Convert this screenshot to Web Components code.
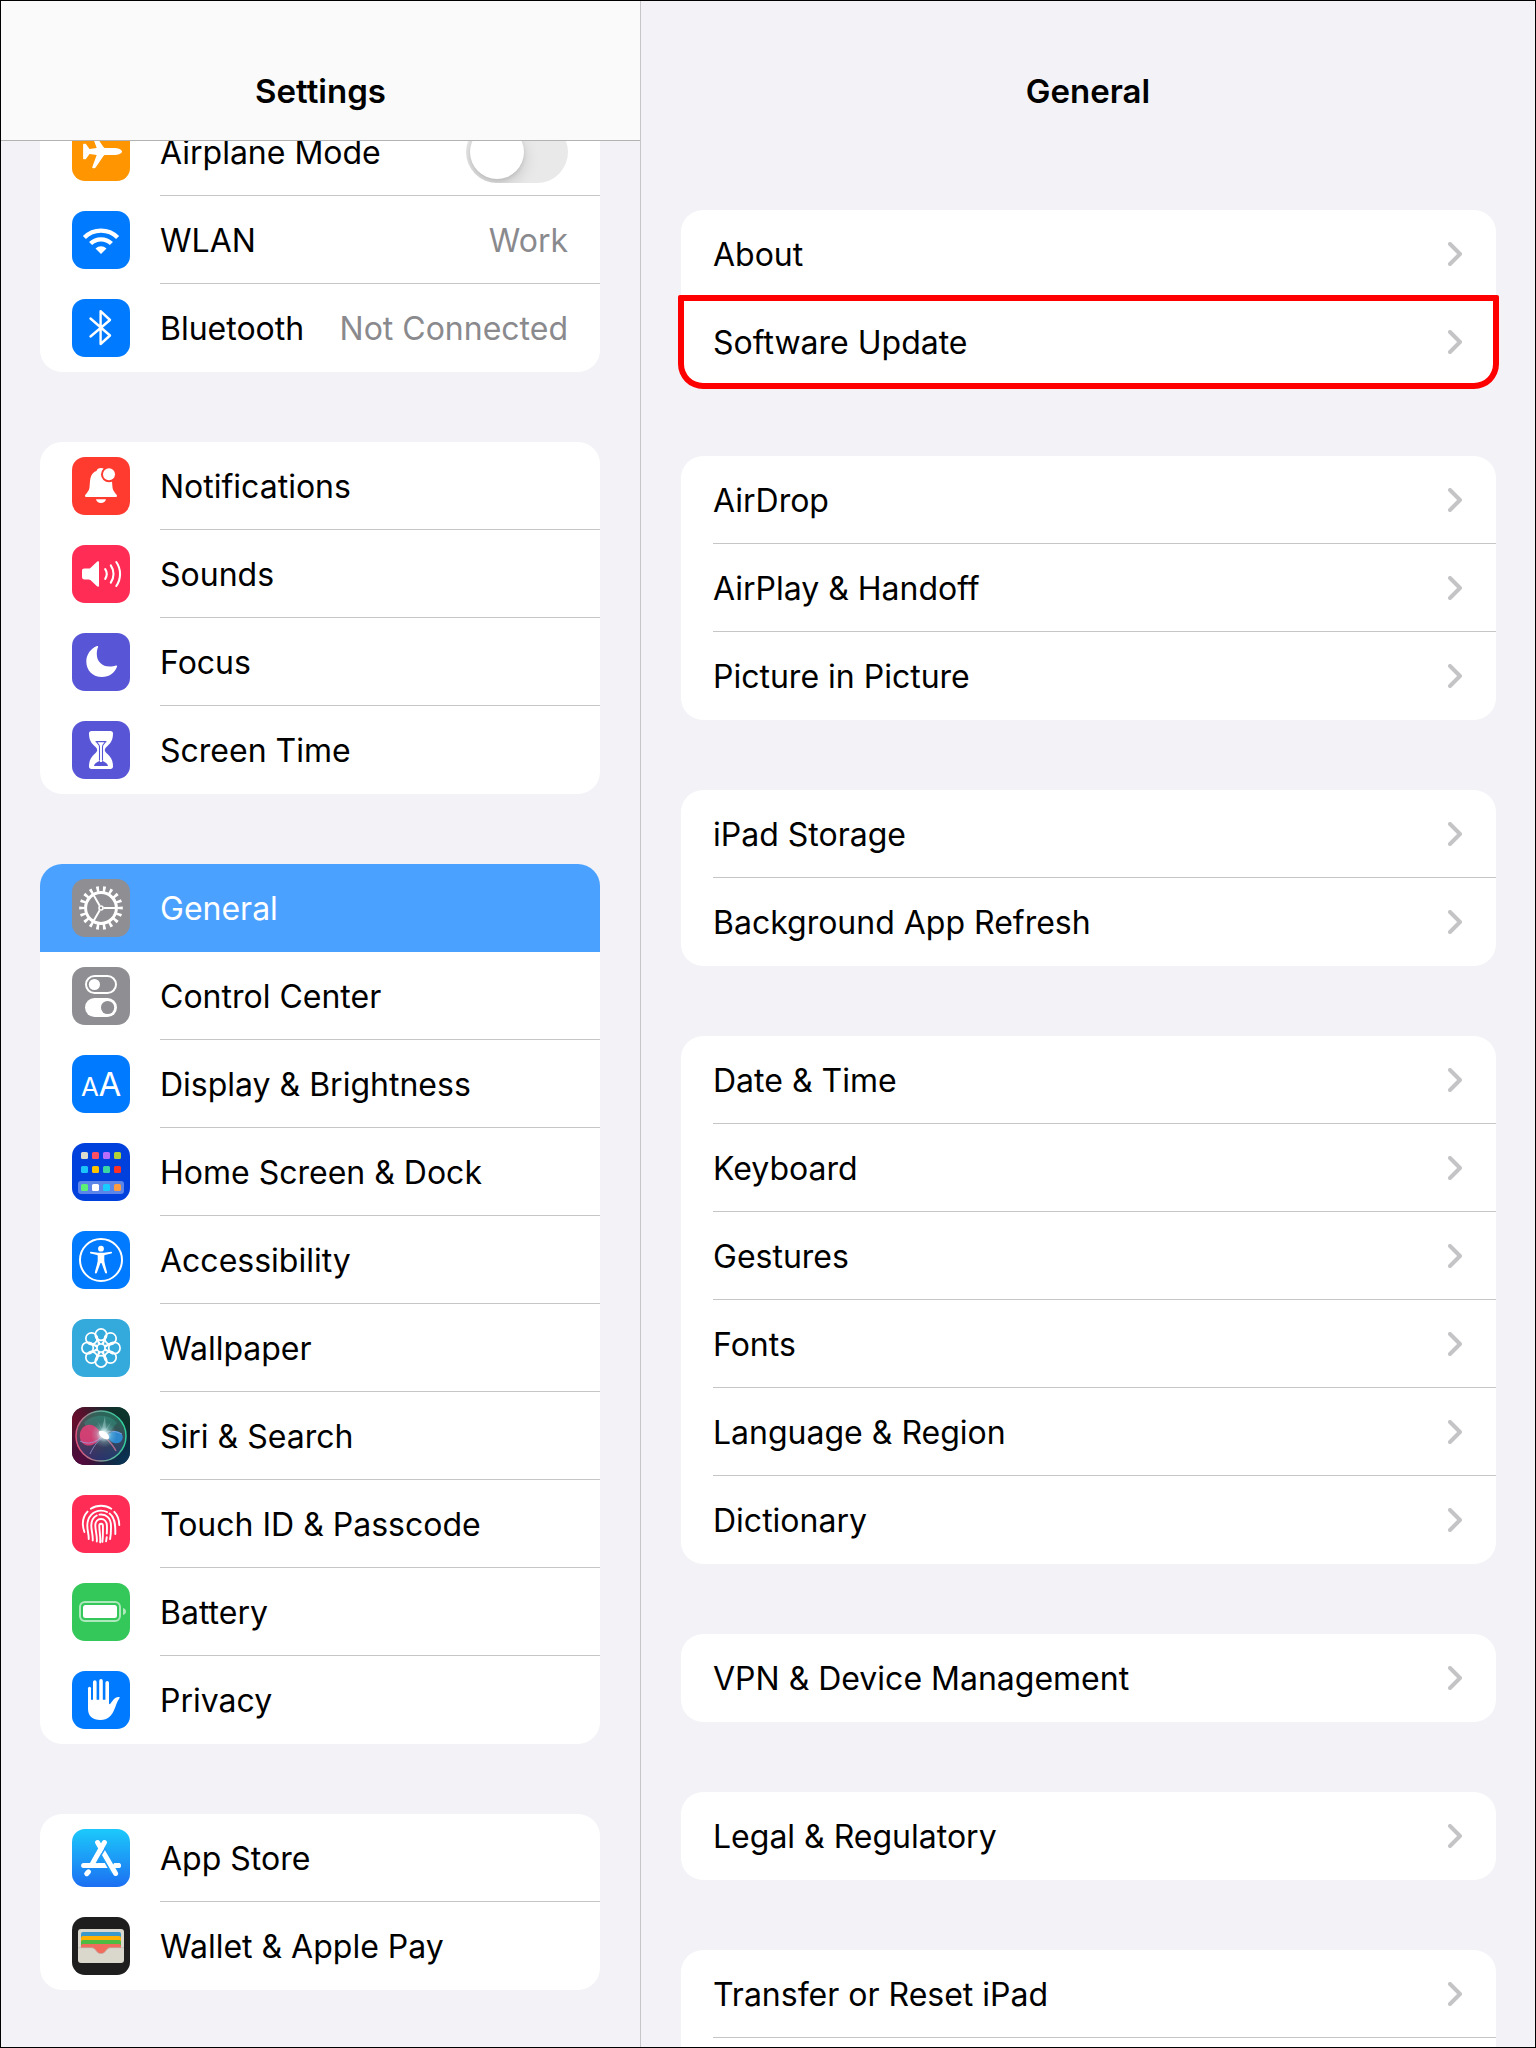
<!DOCTYPE html>
<html lang="en">
<head>
    <meta charset="UTF-8">
    <meta name="viewport" content="width=device-width, initial-scale=1.0">
    <title>Settings</title>
    <style>
        body {
            margin: 0;
            font-family: Inter, "Liberation Sans", sans-serif;
            font-size: 32px;
            line-height: 40px;
            color: #000;
        }
    </style>
</head>
<body>
    <settings-app>
        <settings-pane slot="sidebar" heading="Settings" bar>
            <settings-group>
                <settings-row icon="airplane" label="Airplane Mode" toggle></settings-row>
                <settings-row icon="wifi" label="WLAN" value="Work"></settings-row>
                <settings-row icon="bluetooth" label="Bluetooth" value="Not Connected"></settings-row>
            </settings-group>
            <settings-group>
                <settings-row icon="bell" label="Notifications"></settings-row>
                <settings-row icon="speaker" label="Sounds"></settings-row>
                <settings-row icon="moon" label="Focus"></settings-row>
                <settings-row icon="hourglass" label="Screen Time"></settings-row>
            </settings-group>
            <settings-group>
                <settings-row icon="gear" label="General" selected></settings-row>
                <settings-row icon="switches" label="Control Center"></settings-row>
                <settings-row icon="display" label="Display &amp; Brightness"></settings-row>
                <settings-row icon="home" label="Home Screen &amp; Dock"></settings-row>
                <settings-row icon="accessibility" label="Accessibility"></settings-row>
                <settings-row icon="flower" label="Wallpaper"></settings-row>
                <settings-row icon="siri" label="Siri &amp; Search"></settings-row>
                <settings-row icon="fingerprint" label="Touch ID &amp; Passcode"></settings-row>
                <settings-row icon="battery" label="Battery"></settings-row>
                <settings-row icon="hand" label="Privacy"></settings-row>
            </settings-group>
            <settings-group>
                <settings-row icon="appstore" label="App Store"></settings-row>
                <settings-row icon="wallet" label="Wallet &amp; Apple Pay"></settings-row>
            </settings-group>
        </settings-pane>

        <settings-pane heading="General">
            <settings-group>
                <settings-row label="About" chevron></settings-row>
                <settings-row label="Software Update" chevron highlighted></settings-row>
            </settings-group>
            <settings-group>
                <settings-row label="AirDrop" chevron></settings-row>
                <settings-row label="AirPlay &amp; Handoff" chevron></settings-row>
                <settings-row label="Picture in Picture" chevron></settings-row>
            </settings-group>
            <settings-group>
                <settings-row label="iPad Storage" chevron></settings-row>
                <settings-row label="Background App Refresh" chevron></settings-row>
            </settings-group>
            <settings-group>
                <settings-row label="Date &amp; Time" chevron></settings-row>
                <settings-row label="Keyboard" chevron></settings-row>
                <settings-row label="Gestures" chevron></settings-row>
                <settings-row label="Fonts" chevron></settings-row>
                <settings-row label="Language &amp; Region" chevron></settings-row>
                <settings-row label="Dictionary" chevron></settings-row>
            </settings-group>
            <settings-group>
                <settings-row label="VPN &amp; Device Management" chevron></settings-row>
            </settings-group>
            <settings-group>
                <settings-row label="Legal &amp; Regulatory" chevron></settings-row>
            </settings-group>
            <settings-group continued>
                <settings-row label="Transfer or Reset iPad" chevron></settings-row>
            </settings-group>
        </settings-pane>
    </settings-app>

    <script>
        // Each icon is drawn on a 58x58 tile: [tile colour, svg content]
        const ICONS = {
            airplane: ["#ff9500", `
                <path fill="#fff" d="M50 28.500c0 2-4 3.600-8 3.600h-8.500c-1 0-1.600.3-2.200 1.200L23.800 44.300c-.4.600-.8.900-1.500.9h-1.200c-.7 0-1-.6-.8-1.200L24.700 31.900 17.500 31.100 14.100 35.700c-.3.400-.6.500-1.200.5h-.8c-.6 0-1-.4-1-1V21.800c0-.6.4-1 1-1h.8c.6 0 .9.1 1.200.5l3.400 4.600 7.200-.8L20.300 13c-.2-.6.1-1.200.8-1.200h1.200c.7 0 1.100.3 1.500.9l7.500 11c.6.9 1.200 1.200 2.200 1.200H42c4 0 8 1.600 8 3.600z"/>`],
            wifi: ["#007aff", `
                <g fill="none" stroke="#fff" stroke-width="4.300">
                    <path d="M12.400 26.400A23.500 23.500 0 0 1 45.600 26.400"/>
                    <path d="M18.600 32.600A14.700 14.700 0 0 1 39.400 32.600"/>
                </g>
                <path fill="#fff" d="M29 43l-5.500-5.500a8 8 0 0 1 11 0z"/>`],
            bluetooth: ["#007aff", `
                <path fill="none" stroke="#fff" stroke-width="2.400" stroke-linejoin="round" stroke-linecap="round" d="M18.500 19.500L38 36.500 28.600 45V12.200L38 21 18.500 37.500"/>`],
            bell: ["#ff3b30", `
                <path fill="#fff" d="M13 38.800c0-1.500 4-4 4.500-8.300.4-4 .3-6.500 1-9.500 1-4 3.500-6.300 6-7 .4-1.800 2-3 4.500-3s4.100 1.200 4.500 3c2.500.7 5 3 6 7 .7 3 .6 5.500 1 9.500.5 4.300 4.500 6.800 4.500 8.300 0 .8-.5 1.300-1.500 1.300h-29c-1 0-1.500-.5-1.500-1.300zM24 42.300h10c-.4 2.200-2.400 3.700-5 3.700s-4.600-1.500-5-3.700z"/>
                <circle cx="37" cy="17.300" r="8" fill="#ff3b30"/>
                <circle cx="37" cy="17.300" r="6" fill="#fff"/>`],
            speaker: ["#ff2d55", `
                <path fill="#fff" d="M10 26c0-1.600.9-2.400 2.400-2.400h4.300c.7 0 1.200-.2 1.700-.6l6.600-6.200c1-.9 2-.4 2 .7v23c0 1.300-1 1.700-2 .8L18.400 35c-.5-.4-1-.6-1.700-.6h-4.300c-1.500 0-2.400-.8-2.400-2.400z"/>
                <g fill="none" stroke="#fff" stroke-width="2.100" stroke-linecap="round">
                    <path d="M33.200 24.200c1.900 2.900 1.900 6.700 0 9.600"/>
                    <path d="M38.800 20.300c3.600 5.200 3.600 12.200 0 17.400"/>
                    <path d="M44.300 17c5 7.200 5 16.800 0 24"/>
                </g>`],
            moon: ["#5856d6", `
                <path fill="#fff" d="M25 13c.6-.3 1.400.3 1.100 1.100-1 2.400-1.300 4.600-1.300 6.900 0 7.500 5.200 12.600 12.800 12.600 2.500 0 4.500-.4 6.300-1.100.8-.3 1.400.4 1.100 1.200C42.700 39.900 37 44 30 44c-9 0-15.700-6.500-15.700-15.600C14.300 21.500 18.700 15.600 25 13z"/>`],
            hourglass: ["#5856d6", `
                <path fill="#fff" d="M19.500 10h19c1.600 0 2.500 1 2.500 2.500 0 6.500-2.300 9.500-5.500 12.500-1.600 1.500-2.700 2.500-2.700 4s1.100 2.500 2.700 4c3.200 3 5.500 6 5.500 12.500 0 1.500-.9 2.500-2.500 2.500h-19c-1.600 0-2.500-1-2.500-2.500 0-6.500 2.300-9.500 5.500-12.500 1.600-1.500 2.700-2.500 2.700-4s-1.100-2.500-2.700-4c-3.200-3-5.500-6-5.500-12.500 0-1.500.9-2.500 2.500-2.500z"/>
                <g fill="none" stroke="#5856d6" stroke-width="1.100">
                    <path d="M23.600 20.600h10.800M24.500 20.800c.8 1.700 3 2.600 3 4.600V39M33.500 20.800c-.8 1.700-3 2.600-3 4.600V39"/>
                </g>
                <path fill="#5856d6" d="M27 38.500v1.700c-2.300.9-4.700 2.300-5 4.800h14c-.3-2.500-2.700-3.900-5-4.800v-1.700l-.9 1.500v1h-2.200v-1z"/>`],
            gear: ["#8e8e93", `
                <g fill="none" stroke="#fff">
                    <circle cx="29" cy="29" r="15.400" stroke-width="3"/>
                    <circle cx="29" cy="29" r="19" stroke-width="5.600" pathLength="36" stroke-dasharray="0.800 1.200" stroke-dashoffset="0.400"/>
                    <path stroke-width="2" d="M31.500 29H44M27.700 26.800l-6.300-11M27.700 31.200l-6.300 11"/>
                    <circle cx="29" cy="29" r="2" stroke-width="1.600"/>
                </g>`],
            switches: ["#8e8e93", `
                <rect x="14" y="9" width="30" height="17" rx="8.500" fill="none" stroke="#fff" stroke-width="2"/>
                <circle cx="22.400" cy="17.500" r="5.600" fill="#fff"/>
                <rect x="13" y="31" width="32" height="19" rx="9.500" fill="#fff"/>
                <circle cx="35.600" cy="40.500" r="6.600" fill="#8e8e93"/>`],
            display: ["#007aff", `
                <g fill="#fff" font-family="Inter, sans-serif" text-anchor="middle">
                    <text x="18" y="41" font-size="26">A</text>
                    <text x="38" y="41" font-size="33">A</text>
                </g>`],
            home: ["#0040dd", `
                <rect x="6" y="38" width="46" height="13" rx="3" fill="#fff" opacity=".36"/>
                ${[
                    ["#dcd9cd", "#ff4f63", "#b96dfb", "#b0d236"],
                    ["#1ac4fb", "#ffc300", "#3bd6a3", "#ff3126"],
                    ["#5bf275", "#fff", "#18ccff", "#ff9b40"]
                ].map((row, r) => row.map((color, c) =>
                    `<rect x="${9 + c * 11}" y="${[9, 23, 41][r]}" width="7" height="7" rx="1.500" fill="${color}"/>`
                ).join("")).join("")}`],
            accessibility: ["#007aff", `
                <circle cx="29" cy="29" r="21" fill="none" stroke="#fff" stroke-width="2"/>
                <circle cx="29" cy="17.700" r="2.900" fill="#fff"/>
                <path fill="#fff" d="M19 20.800l7 1h6l7-1c1.200-.2 1.500 1.500.3 1.800l-6.300 1.400c-.5.1-.7.400-.7.900v4.500c0 2 2.600 10.500 2.800 12 .1 1.300-1.600 1.600-2 .4L29.700 32.500c-.2-.6-1.200-.6-1.400 0l-3.400 9.300c-.4 1.200-2.100.9-2-.4.200-1.500 2.800-10 2.800-12v-4.500c0-.5-.2-.8-.7-.9l-6.300-1.400c-1.200-.3-.9-2 .3-1.800z"/>`],
            flower: ["#34aadc", `
                <g fill="none" stroke="#fff" stroke-width="1.700">
                    <circle cx="29" cy="29" r="4"/>
                    ${[0, 45, 90, 135, 180, 225, 270, 315].map(angle => `
                        <g transform="rotate(${angle} 29 29)">
                            <circle cx="29" cy="15.600" r="5.700"/>
                            <path d="M23.400 16.500c.4 4.300 3.600 5.800 4.600 8.600M34.600 16.500c-.4 4.300-3.600 5.800-4.600 8.600"/>
                        </g>`).join("")}
                </g>`],
            siri: ["#14202c", `
                <defs>
                    <radialGradient id="tl" cx="0" cy=".2" r=".8"><stop offset="0" stop-color="#6d0c2c"/><stop offset="1" stop-color="#6d0c2c" stop-opacity="0"/></radialGradient>
                    <radialGradient id="tr" cx="1" cy="0" r=".8"><stop offset="0" stop-color="#0b3b2c"/><stop offset="1" stop-color="#0b3b2c" stop-opacity="0"/></radialGradient>
                    <radialGradient id="bl" cx=".1" cy="1" r=".7"><stop offset="0" stop-color="#5a0840"/><stop offset="1" stop-color="#5a0840" stop-opacity="0"/></radialGradient>
                    <radialGradient id="br" cx="1" cy="1" r=".7"><stop offset="0" stop-color="#08365c"/><stop offset="1" stop-color="#08365c" stop-opacity="0"/></radialGradient>
                    <linearGradient id="ring" x1="0" y1=".6" x2="1" y2=".4"><stop offset="0" stop-color="#e0507c"/><stop offset=".5" stop-color="#6fa59c"/><stop offset="1" stop-color="#2bd39c"/></linearGradient>
                    <linearGradient id="orb" x1="0" y1="0" x2="0" y2="1"><stop offset="0" stop-color="#2f9478"/><stop offset=".5" stop-color="#54606c"/><stop offset="1" stop-color="#2c3f8c"/></linearGradient>
                    <radialGradient id="glow"><stop offset="0" stop-color="#fff"/><stop offset=".25" stop-color="#eafdff" stop-opacity=".8"/><stop offset=".6" stop-color="#b4eef2" stop-opacity=".25"/><stop offset="1" stop-color="#9fe8f0" stop-opacity="0"/></radialGradient>
                </defs>
                <rect width="58" height="58" fill="url(#tl)"/>
                <rect width="58" height="58" fill="url(#tr)"/>
                <rect width="58" height="58" fill="url(#bl)"/>
                <rect width="58" height="58" fill="url(#br)"/>
                <circle cx="29" cy="29" r="25" fill="url(#orb)" fill-opacity=".6" stroke="url(#ring)" stroke-width="1.500"/>
                <path fill="#39c3ad" fill-opacity=".25" d="M12 16c8-9 25-10 33 0-6 8-10 12-16 13-7-1-13-5-17-13z"/>
                <path fill="#e83f78" fill-opacity=".85" d="M31 29c-5-8-9-12-15-11-6 1-9 7-8 13s7 9 12 7c5-1.500 7-6 11-9z"/>
                <path fill="#2b93e0" fill-opacity=".85" d="M31 28c6 1 8-5 13-4 6 1 8 5 6 9-2 4-7 4-10 2-3-2-5-5-9-7z"/>
                <path fill="none" stroke="#9aa8ea" stroke-opacity=".7" d="M8 34c8 4 16 2 22-5s13-5 20-2M18 47c4-9 9-14 14-18"/>
                <path fill="none" stroke="#e07a9c" stroke-opacity=".7" stroke-width="1.500" d="M33 30c4 4 8 8 11 14"/>
                <path fill="#cdf3f2" fill-opacity=".35" d="M32 27L24 12l6 10 3-13 1 13 6-8z"/>
                <circle cx="32" cy="27.500" r="13" fill="url(#glow)"/>
                <ellipse cx="32" cy="28" rx="6" ry="3" fill="#fff" transform="rotate(35 32 28)"/>`],
            fingerprint: ["#ff2d55", `
                <g fill="none" stroke="#fff" stroke-width="1.900" stroke-linecap="round">
                    <path d="M18.800 13.700c6-4 14.500-4 20.500 0"/>
                    <path d="M15.500 16.600C10.500 22 10 30 12.400 37"/>
                    <path d="M42.300 16.800c3.500 3.500 4.900 8 5 13.200"/>
                    <path d="M16.700 44c.3-4-1.400-8-1.400-13.500C15.300 22 21 15.600 29 15.600c2.300 0 4.200.5 6 1.400"/>
                    <path d="M37.600 18.600c4.800 3.600 6 9.400 5.700 20.400"/>
                    <path d="M20.700 45.500c.5-5-1.400-9.500-1.400-15 0-4.700 2-8.200 5.400-10"/>
                    <path d="M27.500 19.600c7-.9 11.400 3.900 11.500 11 .1 5-.1 9-.9 13.500"/>
                    <path d="M24.800 46.500c.6-6-1.500-10.500-1.500-16 0-3.700 2.300-6.500 5.700-6.500s5.800 2.700 5.900 6.500c.1 3 .1 5-.1 8"/>
                    <path d="M34.700 42.300l-.6 4"/>
                    <path d="M28.200 47.300c.5-6-.9-11-.9-16.500 0-2.700 3.500-2.700 3.600 0 .1 6 .2 10.500-.5 16"/>
                </g>`],
            battery: ["#34c759", `
                <rect x="8" y="19" width="40" height="19" rx="5" fill="none" stroke="#fff" stroke-width="2" opacity=".6"/>
                <rect x="11" y="22" width="34" height="13" rx="2.500" fill="#fff"/>
                <path fill="#fff" opacity=".6" d="M51 25c1.800.5 3 1.800 3 3.500s-1.200 3-3 3.500z"/>`],
            hand: ["#007aff", `
                <path fill="none" stroke="#fff" stroke-width="3.600" stroke-linecap="round" d="M22.800 11v22M29 9.900v22M35.200 11.900v22"/>
                <path fill="none" stroke="#fff" stroke-width="3" stroke-linecap="round" d="M17.500 17.300v20"/>
                <path fill="#fff" d="M16 28.800h21v3.500c0 1 .9 1.200 1.500.3 1.500-2.200 3-4.500 4.800-5.600 1.300-.8 3-1.200 4-.9.6.2.4.8 0 1.300-2.400 3.200-3.300 7-5 11.200C39.800 44.800 36 49 28.500 49 20.300 49 16 45 16 37.500z"/>`],
            appstore: ["linear-gradient(#1cc9fb, #1c6ff2)", `
                <g fill="none" stroke="#fff" stroke-width="5" stroke-linecap="round">
                    <path d="M11.600 36.600h34.800"/>
                    <path stroke="#1f9cf7" stroke-width="8" stroke-linecap="butt" d="M30.500 22l12 21"/>
                    <path d="M25.600 13.500l18 31"/>
                    <path stroke="#1f9cf7" stroke-width="1.500" stroke-linecap="butt" d="M33.500 18.500L24.500 34"/>
                    <path d="M32.400 13.500L20.500 34.500M16.500 42.800l-1.800 1.900"/>
                    <path d="M43.500 36.600h2.900"/>
                </g>`],
            wallet: ["#1e1e1e", `
                <rect x="6" y="12" width="46" height="34" rx="3" fill="#dad7cc"/>
                <rect x="9" y="15" width="40" height="8" rx="2" fill="#3b99c9"/>
                <rect x="9" y="19" width="40" height="8" rx="2" fill="#ffb100"/>
                <rect x="9" y="23" width="40" height="8" rx="2" fill="#4fbb41"/>
                <path fill="#f16c5d" d="M9 29c0-1.200.8-2 2-2h36c1.200 0 2 .8 2 2v2H38c-4 0-4 5.700-9 5.700S24 31 20 31H9z"/>
                <path fill="none" stroke="#b9b6ac" stroke-width=".7" d="M6 30.700h14c4 0 4 5.900 9 5.900s5-5.900 9-5.900h14"/>`]
        };

        class SettingsApp extends HTMLElement {
            constructor() {
                super();
                this.attachShadow({ mode: "open" });
            }

            connectedCallback() {
                this.shadowRoot.innerHTML = `
                    <style>
                        :host {
                            display: grid;
                            grid-template-columns: min(42%, 640px) minmax(0, 1fr);
                            grid-template-rows: minmax(0, 1fr);
                            height: 100vh;
                            box-sizing: border-box;
                            border: 1px solid #000;
                            background-color: #f2f2f7;
                        }
                        aside {
                            border-right: 1px solid #c6c6c8;
                        }
                        aside, main {
                            overflow: hidden;
                        }
                    </style>
                    <aside><slot name="sidebar"></slot></aside>
                    <main><slot></slot></main>
                `;
            }
        }

        class SettingsPane extends HTMLElement {
            constructor() {
                super();
                this.attachShadow({ mode: "open" });
            }

            connectedCallback() {
                this.shadowRoot.innerHTML = `
                    <style>
                        :host {
                            display: flex;
                            flex-direction: column;
                        }
                        header {
                            display: flex;
                            flex: none;
                            align-items: flex-end;
                            justify-content: center;
                            height: 140px;
                            box-sizing: border-box;
                            padding-bottom: 30px;
                        }
                        h1 {
                            margin: 0;
                            font-size: 33px;
                            line-height: 40px;
                            font-weight: 600;
                        }
                        .groups {
                            display: flex;
                            flex-direction: column;
                            gap: 70px;
                            padding: 69px 39px 0 40px;
                        }
                        /* the list is scrolled a little way under the title bar */
                        :host([bar]) header {
                            position: relative;
                            z-index: 1;
                            padding-bottom: 29px;
                            background-color: #fafafa;
                            border-bottom: 1px solid #b2b2b2;
                        }
                        :host([bar]) .groups {
                            margin-top: -33px;
                            padding: 0 40px 0 39px;
                        }
                    </style>
                    <header><h1>${this.getAttribute("heading")}</h1></header>
                    <div class="groups"><slot></slot></div>
                `;
            }
        }

        class SettingsGroup extends HTMLElement {
            constructor() {
                super();
                this.attachShadow({ mode: "open" });
            }

            connectedCallback() {
                this.shadowRoot.innerHTML = `
                    <style>
                        :host {
                            display: block;
                            background-color: #fff;
                            border-radius: 22px;
                        }
                        :host([continued]) {
                            padding-bottom: 88px;
                            --last-divider: #c6c6c8;
                        }
                    </style>
                    <slot></slot>
                `;
            }
        }

        class SettingsIcon extends HTMLElement {
            constructor() {
                super();
                this.attachShadow({ mode: "open" });
            }

            connectedCallback() {
                const [background, content] = ICONS[this.getAttribute("name")];
                this.shadowRoot.innerHTML = `
                    <style>
                        :host {
                            display: block;
                            flex: none;
                            width: 58px;
                            height: 58px;
                            border-radius: 13px;
                            overflow: hidden;
                            background: ${background};
                        }
                        svg {
                            display: block;
                        }
                    </style>
                    <svg width="58" height="58" viewBox="0 0 58 58" aria-hidden="true">${content}</svg>
                `;
            }
        }

        class SettingsRow extends HTMLElement {
            constructor() {
                super();
                this.attachShadow({ mode: "open" });
            }

            connectedCallback() {
                const icon = this.getAttribute("icon");
                const tag = this.hasAttribute("toggle") ? "label" : "a";
                this.shadowRoot.innerHTML = `
                    <style>${this.getStyles()}</style>
                    <${tag} class="row" ${tag === "a" ? 'href="#"' : ""}>
                        ${icon ? `<settings-icon name="${icon}"></settings-icon>` : ""}
                        <span class="body">
                            <span class="label"></span>
                            ${this.getAccessory()}
                        </span>
                    </${tag}>
                `;
                this.shadowRoot.querySelector(".label").textContent = this.getAttribute("label");
            }

            getAccessory() {
                if (this.hasAttribute("toggle")) {
                    return `<input type="checkbox" role="switch">`;
                }
                if (this.hasAttribute("chevron")) {
                    return `<svg width="16" height="24" viewBox="0 0 16 24" aria-hidden="true">
                        <path d="M2 2l10 10L2 22" fill="none" stroke="#c4c4c6" stroke-width="4" stroke-linecap="round" stroke-linejoin="round"/>
                    </svg>`;
                }
                if (this.hasAttribute("value")) {
                    return `<span class="value">${this.getAttribute("value")}</span>`;
                }
                return "";
            }

            getStyles() {
                return `
                    :host {
                        display: block;
                    }
                    .row {
                        display: flex;
                        align-items: center;
                        gap: 30px;
                        height: 88px;
                        padding-left: 32px;
                        color: inherit;
                        text-decoration: none;
                    }
                    .body {
                        display: flex;
                        flex: 1;
                        align-items: center;
                        justify-content: space-between;
                        height: 100%;
                        box-sizing: border-box;
                        padding-right: 32px;
                        border-bottom: 1px solid #c6c6c8;
                        white-space: nowrap;
                    }
                    :host(:last-child) .body {
                        border-bottom-color: var(--last-divider, transparent);
                    }
                    .label, .value {
                        padding-top: 2px;
                    }
                    .value {
                        color: #8a8a8e;
                    }
                    :host([selected]) .row {
                        background-color: #4ba1ff;
                        border-radius: 22px 22px 0 0;
                        color: #fff;
                    }
                    :host([selected]) .body {
                        border-bottom-color: transparent;
                    }
                    :host([highlighted]) {
                        position: relative;
                    }
                    :host([highlighted])::after {
                        content: "";
                        position: absolute;
                        inset: -3px;
                        border: 6px solid #ff0000;
                        border-radius: 2px 2px 25px 25px;
                        pointer-events: none;
                    }
                    input {
                        appearance: none;
                        display: flex;
                        align-items: center;
                        width: 102px;
                        height: 62px;
                        margin: 0;
                        padding: 4px;
                        box-sizing: border-box;
                        border-radius: 31px;
                        background-color: #e9e9ea;
                        overflow: hidden;
                    }
                    input::before {
                        content: "";
                        width: 54px;
                        height: 54px;
                        border-radius: 50%;
                        background-color: #fff;
                        box-shadow: 0 6px 16px rgba(0, 0, 0, 0.15), 0 2px 4px rgba(0, 0, 0, 0.1);
                    }
                    input:checked {
                        justify-content: flex-end;
                        background-color: #34c759;
                    }
                `;
            }
        }

        customElements.define("settings-app", SettingsApp);
        customElements.define("settings-pane", SettingsPane);
        customElements.define("settings-group", SettingsGroup);
        customElements.define("settings-icon", SettingsIcon);
        customElements.define("settings-row", SettingsRow);
    </script>
</body>
</html>
